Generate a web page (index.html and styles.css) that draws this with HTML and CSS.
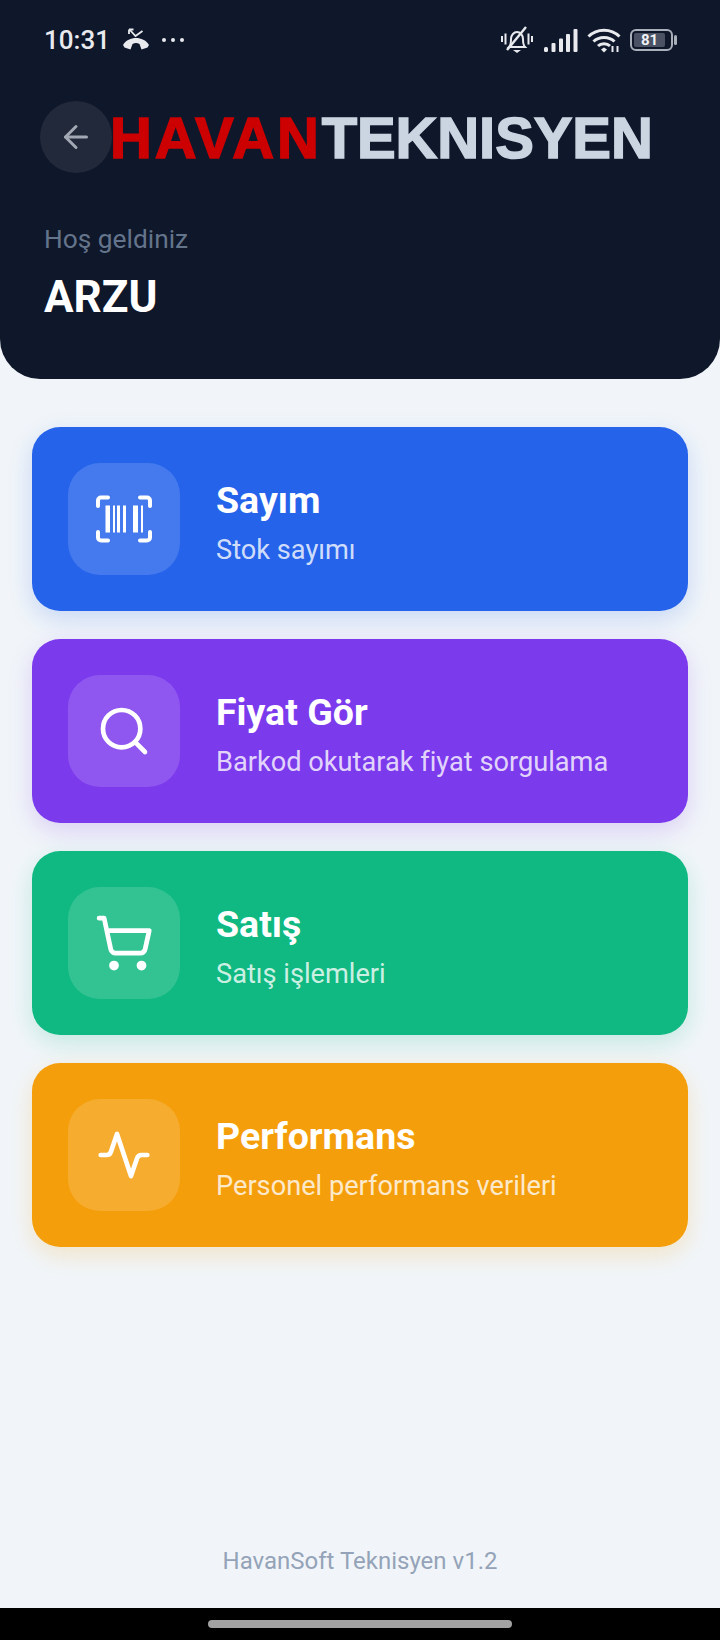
FILE: index.html
```html
<!DOCTYPE html>
<html lang="tr">
<head>
  <meta charset="UTF-8">
  <title>HavanSoft Teknisyen</title>
  <link rel="stylesheet" href="styles.css">
</head>
<body>
  <header class="header">
    <div class="status-bar">
      <span class="time">10:31</span>
      <svg class="st-call" viewBox="0 0 26 22">
        <path d="M6.500 1.500l6 6.500 7-5" fill="none" stroke="#e8eaee" stroke-width="1.800"/>
        <path d="M6 1.500v4.500M6 1.500h4.500" fill="none" stroke="#e8eaee" stroke-width="1.800"/>
        <path d="M0 17c3-5 8-7 13-7s10 2 13 7l-1.500 2.500-6 2-2-5.500c-2.500-1.500-4.500-1.500-7 0l-2 5.500-6-2z" fill="#e8eaee"/>
      </svg>
      <span class="st-dots"><i></i><i></i><i></i></span>
      <span class="st-right">
        <svg class="st-bell" viewBox="0 0 32 28">
          <path d="M8 21c2-2 2-4 2-8 0-4 3-7 6-7s6 3 6 7c0 4 0 6 2 8z" fill="none" stroke="#e8eaee" stroke-width="2"/>
          <path d="M12 24h8l-4 3z" fill="#e8eaee"/>
          <path d="M6 24L25 1" stroke="#e8eaee" stroke-width="2.400"/>
          <path d="M1 10v6M4.500 7.500v11M27.500 7.500v11M31 10v6" stroke="#e8eaee" stroke-width="2"/>
        </svg>
        <svg class="st-signal" viewBox="0 0 34 23">
          <g fill="#e8eaee">
            <rect x="0" y="18" width="4" height="5" rx="1.500"/>
            <rect x="7.500" y="14" width="4" height="9" rx="1"/>
            <rect x="15" y="9.500" width="4" height="13.500" rx="1"/>
            <rect x="22" y="5" width="4" height="18" rx="1"/>
            <rect x="29.500" y="0" width="4" height="23" rx="1"/>
          </g>
        </svg>
        <svg class="st-wifi" viewBox="0 0 34 26">
          <g fill="none" stroke="#e8eaee" stroke-width="3">
            <path d="M1.500 9.500C10 1 24 1 32.500 9.500"/>
            <path d="M6.500 14.500C12 9 22 9 27.500 14.500"/>
            <path d="M11 19c3-3 9-3 12 0"/>
          </g>
          <path d="M14 22.500l3-2 3 2-3 3z" fill="#e8eaee"/>
          <path d="M25.500 19v6M30.500 19v6" stroke="#e8eaee" stroke-width="2"/>
        </svg>
        <span class="st-battery"><span class="st-level">81</span></span>
      </span>
    </div>

    <div class="brand-row">
      <button class="back-btn">
        <svg viewBox="0 0 24 24" class="line-icon back-icon"><path d="M12 19l-7-7 7-7"/><path d="M19 12H5"/></svg>
      </button>
      <div class="logo"><span class="logo-red">HAVAN</span><span class="logo-grey">TEKNISYEN</span></div>
    </div>

    <p class="welcome">Hoş geldiniz</p>
    <h1 class="user-name">ARZU</h1>
  </header>

  <main class="menu">
    <a class="card card-blue">
      <span class="card-icon">
        <svg viewBox="0 0 56 56" class="barcode-icon">
          <g fill="none" stroke="#fff" stroke-width="4" stroke-linecap="round">
            <path d="M12 6.500H5a3 3 0 0 0-3 3V15"/>
            <path d="M44 6.500h7a3 3 0 0 1 3 3V15"/>
            <path d="M12 49.500H5a3 3 0 0 1-3-3V41"/>
            <path d="M44 49.500h7a3 3 0 0 0 3-3V41"/>
          </g>
          <g fill="#fff">
            <rect x="9.500" y="14.500" width="4.500" height="27"/>
            <rect x="17" y="14.500" width="2" height="27"/>
            <rect x="21" y="14.500" width="3" height="27"/>
            <rect x="27" y="14.500" width="3" height="27"/>
            <rect x="37" y="14.500" width="5" height="27"/>
            <rect x="45" y="14.500" width="2" height="27"/>
          </g>
        </svg>
      </span>
      <span class="card-text">
        <span class="card-title">Sayım</span>
        <span class="card-sub">Stok sayımı</span>
      </span>
    </a>

    <a class="card card-purple">
      <span class="card-icon">
        <svg viewBox="0 0 24 24" class="line-icon"><circle cx="11" cy="11" r="8"/><path d="M21 21l-4.300-4.300"/></svg>
      </span>
      <span class="card-text">
        <span class="card-title">Fiyat Gör</span>
        <span class="card-sub">Barkod okutarak fiyat sorgulama</span>
      </span>
    </a>

    <a class="card card-green">
      <span class="card-icon">
        <svg viewBox="0 0 24 24" class="line-icon cart-icon">
          <circle cx="8" cy="21" r="1"/><circle cx="19" cy="21" r="1"/>
          <path d="M2.050 2.050h2l2.660 12.420a2 2 0 0 0 2 1.580h9.780a2 2 0 0 0 1.950-1.570l1.650-7.430H5.120"/>
        </svg>
      </span>
      <span class="card-text">
        <span class="card-title">Satış</span>
        <span class="card-sub">Satış işlemleri</span>
      </span>
    </a>

    <a class="card card-amber">
      <span class="card-icon">
        <svg viewBox="0 0 24 24" class="line-icon"><path d="M22 12h-2.500a2 2 0 0 0-1.900 1.400L15 21 9 3 6.400 10.600A2 2 0 0 1 4.500 12H2"/></svg>
      </span>
      <span class="card-text">
        <span class="card-title">Performans</span>
        <span class="card-sub">Personel performans verileri</span>
      </span>
    </a>
  </main>

  <footer class="footer">HavanSoft Teknisyen v1.2</footer>

  <div class="nav-bar"><span class="nav-pill"></span></div>
</body>
</html>
```

FILE: styles.css
```css
* {
  box-sizing: border-box;
}

body {
  margin: 0;
  height: 1640px;
  display: flex;
  flex-direction: column;
  background: #f1f5f9;
  font-family: Roboto, "Noto Sans", sans-serif;
  overflow: hidden;
}

.header {
  height: 379px;
  background: #0f172a;
  border-radius: 0 0 40px 40px;
  padding: 0 44px;
  flex-shrink: 0;
}

/* status bar */
.status-bar {
  height: 80px;
  display: flex;
  align-items: center;
  color: #e8eaee;
}

.time {
  font-size: 26px;
  font-weight: 500;
  width: 79px;
}

.st-call {
  width: 26px;
  height: 22px;
  margin-top: -2px;
}

.st-dots {
  display: flex;
  gap: 5px;
  margin-left: 13px;
}

.st-dots i {
  width: 4px;
  height: 4px;
  border-radius: 50%;
  background: #e8eaee;
}

.st-right {
  margin-left: auto;
  display: flex;
  align-items: center;
  margin-right: -1px;
}

.st-bell {
  width: 32px;
  height: 28px;
  margin-right: 11px;
}

.st-signal {
  width: 34px;
  height: 23px;
  margin-right: 9px;
}

.st-wifi {
  width: 34px;
  height: 26px;
  margin-right: 9px;
}

.st-battery {
  position: relative;
  width: 43px;
  height: 22px;
  border: 2px solid #aab0ba;
  border-radius: 6px;
  padding: 2px;
  margin-right: 4px;
}

.st-battery::after {
  content: "";
  position: absolute;
  right: -6px;
  top: 4px;
  width: 3px;
  height: 10px;
  border-radius: 2px;
  background: #aab0ba;
}

.st-level {
  display: block;
  width: 31px;
  height: 14px;
  background: #4a5263;
  border-radius: 2px;
  color: #f0f2f5;
  font-size: 15px;
  font-weight: 700;
  line-height: 14px;
  text-align: center;
}

/* logo row */
.brand-row {
  display: flex;
  align-items: center;
  margin: 20px 0 0 -4px;
}

.back-btn {
  width: 72px;
  height: 72px;
  border: none;
  border-radius: 50%;
  background: rgba(255, 255, 255, 0.08);
  display: flex;
  align-items: center;
  justify-content: center;
  padding: 0;
  flex-shrink: 0;
}

.logo {
  font-family: "Liberation Sans", Arial, sans-serif;
  font-size: 58px;
  font-weight: 700;
  line-height: 72px;
  white-space: nowrap;
  -webkit-text-stroke: 1.5px currentColor;
  margin: 2px 0 0 -2px;
}

.logo-red {
  color: #cc0000;
  letter-spacing: 2.8px;
}

.logo-grey {
  color: #cbd5e1;
  letter-spacing: -0.1px;
}

.welcome {
  margin: 49px 0 0;
  font-size: 26.3px;
  line-height: 32px;
  color: #64748b;
}

.user-name {
  margin: 16px 0 0;
  font-size: 44px;
  line-height: 52px;
  font-weight: 700;
  color: #fff;
}

/* menu cards */
.menu {
  flex: 1;
  display: flex;
  flex-direction: column;
  gap: 28px;
  padding: 48px 32px 0;
}

.card {
  height: 184px;
  border-radius: 28px;
  padding: 36px;
  display: flex;
  align-items: center;
  gap: 36px;
  color: #fff;
}

.card-blue {
  background: #2563eb;
  box-shadow: 0 8px 24px rgba(37, 99, 235, 0.2);
}

.card-purple {
  background: #7c3aed;
  box-shadow: 0 8px 24px rgba(124, 58, 237, 0.2);
}

.card-green {
  background: #10b981;
  box-shadow: 0 8px 24px rgba(16, 185, 129, 0.2);
}

.card-amber {
  background: #f59e0b;
  box-shadow: 0 8px 24px rgba(245, 158, 11, 0.2);
}

.card-icon {
  width: 112px;
  height: 112px;
  border-radius: 32px;
  background: rgba(255, 255, 255, 0.15);
  display: flex;
  align-items: center;
  justify-content: center;
  flex-shrink: 0;
}

.line-icon {
  width: 56px;
  height: 56px;
  fill: none;
  stroke: #fff;
  stroke-width: 2;
  stroke-linecap: round;
  stroke-linejoin: round;
}

.line-icon.back-icon {
  width: 36px;
  height: 36px;
  stroke: #a3a9b4;
}

.line-icon.cart-icon {
  width: 60px;
  height: 60px;
  stroke-width: 1.9;
}

.barcode-icon {
  width: 56px;
  height: 56px;
}

.card-text {
  display: flex;
  flex-direction: column;
  padding-top: 6px;
}

.card-title {
  font-size: 37.5px;
  line-height: 42px;
  font-weight: 700;
}

.card-sub {
  font-size: 27.2px;
  line-height: 32px;
  margin-top: 13px;
  color: rgba(255, 255, 255, 0.8);
}

.footer {
  text-align: center;
  font-size: 24px;
  line-height: 32px;
  color: #94a3b8;
  padding-bottom: 31px;
}

.nav-bar {
  height: 32px;
  background: #000;
  display: flex;
  justify-content: center;
  padding-top: 12px;
  flex-shrink: 0;
}

.nav-pill {
  width: 304px;
  height: 8px;
  border-radius: 4px;
  background: #a2a2a2;
}
```
